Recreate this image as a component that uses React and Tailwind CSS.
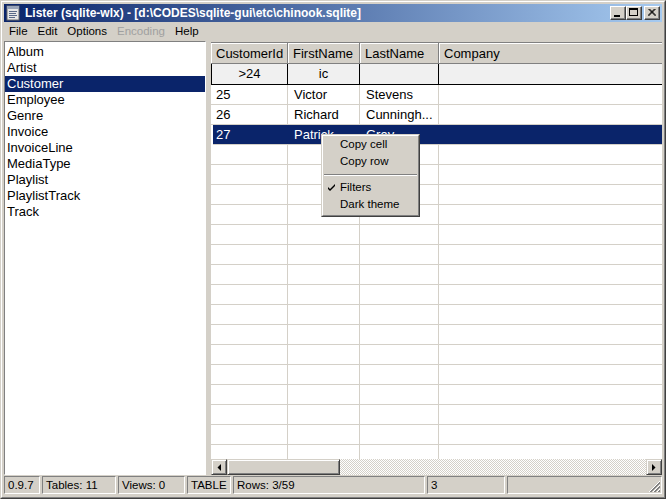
import React from "react";

const tables = ["Album","Artist","Customer","Employee","Genre","Invoice","InvoiceLine","MediaType","Playlist","PlaylistTrack","Track"];
const rows = [
  ["25","Victor","Stevens",""],
  ["26","Richard","Cunningh...",""],
  ["27","Patrick","Gray",""],
];

function TitleBtn({ children, className = "" }) {
  return (
    <div className={"w-[16px] h-[14px] bg-[#d4d0c8] border border-t-white border-l-white border-r-[#404040] border-b-[#404040] shadow-[inset_-1px_-1px_0_#808080] flex items-center justify-center relative " + className}>
      {children}
    </div>
  );
}

function ScrollBtn({ dir }) {
  return (
    <div className="w-[16px] h-[16px] shrink-0 bg-[#d4d0c8] border border-t-[#d4d0c8] border-l-[#d4d0c8] border-r-[#404040] border-b-[#404040] shadow-[inset_1px_1px_0_#fff,inset_-1px_-1px_0_#808080] flex items-center justify-center">
      <svg width="4" height="7" viewBox="0 0 4 7">
        {dir === "left" ? <polygon points="4,0 4,7 0.5,3.5" fill="#000" /> : <polygon points="0,0 0,7 3.5,3.5" fill="#000" />}
      </svg>
    </div>
  );
}

export default function App() {
  const widths = ["w-[77px]", "w-[72px]", "w-[79px]"];
  return (
    <div className="w-[666px] h-[499px] bg-[#d4d0c8] border border-t-[#d4d0c8] border-l-[#d4d0c8] border-r-[#404040] border-b-[#404040] font-['Liberation_Sans',Arial,sans-serif] text-black overflow-hidden relative">
      <div className="h-full border border-t-white border-l-white border-r-[#808080] border-b-[#808080]">
        <div className="h-full p-[2px] flex flex-col">
          {/* Title bar */}
          <div className="h-[18px] shrink-0 flex items-center bg-[linear-gradient(to_right,#0a246a,#a6caf0)]">
            <svg width="16" height="16" viewBox="0 0 16 16" className="ml-[1px] shrink-0">
              <rect x="2" y="1" width="12" height="14" fill="#e8e8e8" stroke="#6b6b6b" />
              <rect x="2" y="1" width="12" height="3" fill="#9aa4b8" />
              <line x1="4" y1="6.5" x2="12" y2="6.5" stroke="#5a6a88" />
              <line x1="4" y1="8.5" x2="11" y2="8.5" stroke="#5a6a88" />
              <line x1="4" y1="10.5" x2="12" y2="10.5" stroke="#5a6a88" />
              <line x1="4" y1="12.5" x2="10" y2="12.5" stroke="#5a6a88" />
            </svg>
            <span className="ml-[4px] text-white font-bold text-[12px] leading-none whitespace-nowrap">
              Lister (sqlite-wlx) - [d:\CODES\sqlite-gui\etc\chinook.sqlite]
            </span>
            <div className="ml-auto flex items-center mr-[2px]">
              <TitleBtn>
                <div className="absolute left-[3px] top-[8px] w-[6px] h-[2px] bg-black" />
              </TitleBtn>
              <TitleBtn>
                <div className="absolute left-[2px] top-[1px] w-[9px] h-[8px] border border-black border-t-2" />
              </TitleBtn>
              <TitleBtn className="ml-[2px]">
                <svg width="8" height="7" viewBox="0 0 8 7" className="absolute left-[3px] top-[2px]">
                  <path d="M0.5 0 L7.5 7 M1.5 0 L8 6.5 M7.5 0 L0.5 7 M6.5 0 L0 6.5" stroke="#000" strokeWidth="1" />
                </svg>
              </TitleBtn>
            </div>
          </div>

          {/* Menu bar */}
          <div className="h-[19px] shrink-0 flex items-center text-[11.5px]">
            <span className="px-[5px]">File</span>
            <span className="px-[5px]">Edit</span>
            <span className="px-[5px]">Options</span>
            <span className="px-[5px] text-[#a0a0a0]">Encoding</span>
            <span className="px-[5px]">Help</span>
          </div>

          {/* Main */}
          <div className="flex-1 flex min-h-0">
            {/* List */}
            <div className="w-[202px] shrink-0 bg-white border border-t-[#808080] border-l-[#808080] border-r-white border-b-white pt-[2px] overflow-hidden">
              {tables.map((t) => (
                <div
                  key={t}
                  className={"h-[16px] leading-[16px] text-[13px] pl-[2px] " + (t === "Customer" ? "bg-[#0a246a] text-white" : "")}
                >
                  {t}
                </div>
              ))}
            </div>
            {/* Splitter */}
            <div className="w-[5px] shrink-0" />
            {/* Grid */}
            <div className="flex-1 flex flex-col min-w-0 border-t border-t-[#808080] mt-[1px]">
              {/* header */}
              <div className="h-[21px] shrink-0 flex bg-[#d4d0c8] border-b border-b-[#808080] text-[13px]">
                {["CustomerId","FirstName","LastName"].map((h, i) => (
                  <div key={h} className={widths[i] + " shrink-0 h-full pl-[5px] leading-[21px] border-r border-r-[#808080] shadow-[inset_1px_1px_0_#fff] whitespace-nowrap overflow-hidden"}>
                    {h}
                  </div>
                ))}
                <div className="flex-1 h-full pl-[5px] leading-[21px] shadow-[inset_1px_1px_0_#fff]">Company</div>
              </div>
              {/* filter row */}
              <div className="h-[21px] shrink-0 flex bg-[#f0f0f0] border-b border-b-black border-l border-l-black text-[13px]">
                {[">24","ic",""].map((f, i) => (
                  <div key={i} className={(i === 0 ? "w-[76px]" : widths[i]) + " shrink-0 h-full text-center leading-[20px] border-r border-r-black"}>
                    {f}
                  </div>
                ))}
                <div className="flex-1" />
              </div>
              {/* body */}
              <div className="flex-1 min-h-0 overflow-hidden bg-white">
                {Array.from({ length: 20 }).map((_, r) => {
                  const row = rows[r] || ["", "", "", ""];
                  const sel = r === 2;
                  return (
                    <div key={r} className={"h-[20px] flex border-b border-b-[#d4d0c8] text-[13px] " + (sel ? "bg-[#0a246a] text-white ml-[2px]" : "")}>
                      {[0, 1, 2].map((c) => (
                        <div
                          key={c}
                          className={(sel && c === 0 ? "w-[75px] pl-[3px]" : widths[c] + (c === 0 ? " pl-[5px]" : " pl-[6px]")) + " shrink-0 h-full leading-[19px] whitespace-nowrap overflow-hidden " + (sel ? "" : "border-r border-r-[#d4d0c8]")}
                        >
                          {row[c]}
                        </div>
                      ))}
                      <div className="flex-1" />
                    </div>
                  );
                })}
              </div>
              {/* scrollbar */}
              <div className="h-[16px] shrink-0 flex">
                <ScrollBtn dir="left" />
                <div className="w-[113px] shrink-0 bg-[#d4d0c8] border border-t-[#d4d0c8] border-l-[#d4d0c8] border-r-[#404040] border-b-[#404040] shadow-[inset_1px_1px_0_#fff,inset_-1px_-1px_0_#808080]" />
                <div className="flex-1 bg-[repeating-conic-gradient(#d4d0c8_0_25%,#ffffff_0_50%)] bg-[length:2px_2px]" />
                <ScrollBtn dir="right" />
              </div>
            </div>
          </div>

          {/* Status bar */}
          <div className="h-[20px] shrink-0 flex items-end gap-[2px] text-[11.5px] pb-[1px]">
            {[
              ["w-[36px]", "0.9.7"],
              ["w-[74px]", "Tables: 11"],
              ["w-[67px]", "Views: 0"],
              ["w-[44px]", "TABLE"],
              ["w-[192px]", "Rows: 3/59"],
              ["w-[78px]", "3"],
            ].map(([w, t], i) => (
              <div key={i} className={w + " shrink-0 h-[18px] border border-t-[#808080] border-l-[#808080] border-r-white border-b-white pl-[3px] leading-[17px] whitespace-nowrap"}>
                {t}
              </div>
            ))}
            <div className="flex-1 h-[18px] border border-t-[#808080] border-l-[#808080] border-r-white border-b-white relative">
              <svg width="12" height="12" viewBox="0 0 12 12" className="absolute right-[0px] bottom-[0px]">
                <path d="M11 1 L1 11 M11 5 L5 11 M11 9 L9 11" stroke="#808080" strokeWidth="1" />
                <path d="M11 2 L2 11 M11 6 L6 11 M11 10 L10 11" stroke="#808080" strokeWidth="1" />
                <path d="M11 0 L0 11 M11 4 L4 11 M11 8 L8 11" stroke="#ffffff" strokeWidth="1" />
              </svg>
            </div>
          </div>
        </div>
      </div>

      {/* Context menu */}
      <div className="absolute left-[320px] top-[133px] w-[99px] h-[83px] bg-[#d4d0c8] border border-t-[#d4d0c8] border-l-[#d4d0c8] border-r-[#404040] border-b-[#404040] text-[11.5px]">
        <div className="h-full border border-t-white border-l-white border-r-[#808080] border-b-[#808080]">
          <div className="h-[17px] leading-[17px] pl-[17px]">Copy cell</div>
          <div className="h-[17px] leading-[17px] pl-[17px]">Copy row</div>
          <div className="h-[9px] flex items-center px-[1px]">
            <div className="w-full h-[2px] border-t border-t-[#808080] border-b border-b-white" />
          </div>
          <div className="h-[17px] leading-[17px] pl-[17px] relative">
            <svg width="7" height="7" viewBox="0 0 7 7" className="absolute left-[5px] top-[5px]">
              <path d="M0 3 L2 5 L7 0 L7 2 L2 7 L0 5 Z" fill="#000" />
            </svg>
            Filters
          </div>
          <div className="h-[17px] leading-[17px] pl-[17px]">Dark theme</div>
        </div>
      </div>
    </div>
  );
}
